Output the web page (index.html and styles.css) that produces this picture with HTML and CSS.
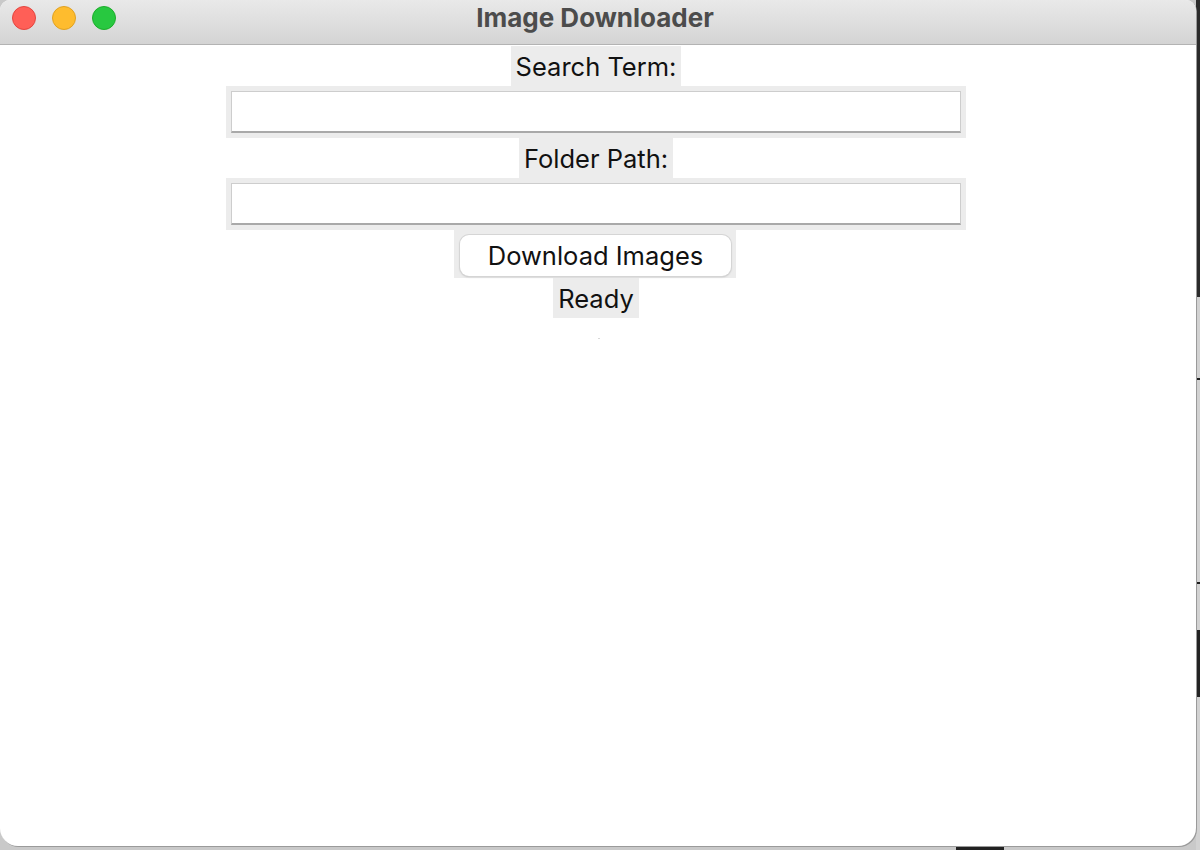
FILE: index.html
```html
<!DOCTYPE html>
<html>
<head>
<meta charset="utf-8">
<title>Image Downloader</title>
<link rel="stylesheet" href="styles.css">
</head>
<body>
<div class="window">
  <div class="titlebar">
    <div class="lights">
      <span class="light red"></span>
      <span class="light yellow"></span>
      <span class="light green"></span>
    </div>
    <div class="title">Image Downloader</div>
  </div>
  <div class="content">
    <div class="label">Search Term:</div>
    <div class="entry-frame"><input class="entry" type="text"></div>
    <div class="label">Folder Path:</div>
    <div class="entry-frame"><input class="entry" type="text"></div>
    <div class="button-frame"><button class="button">Download Images</button></div>
    <div class="label">Ready</div>
    <div class="progress"></div>
  </div>
</div>
</body>
</html>
```
FILE: styles.css
```css
html, body {
  margin: 0;
  padding: 0;
}
body {
  width: 1200px;
  height: 850px;
  overflow: hidden;
  background:
    linear-gradient(to right, transparent 956px, #222 956px, #222 1004px, transparent 1004px) 0 846px / 1200px 4px no-repeat,
    linear-gradient(to bottom, #2b2b2b 0, #2b2b2b 297px, #d2d2d2 297px, #d2d2d2 378px, #1e1e1e 378px, #1e1e1e 380px, #d2d2d2 380px, #d2d2d2 582px, #1e1e1e 582px, #1e1e1e 584px, #d2d2d2 584px, #d2d2d2 630px, #232323 630px, #232323 697px, #d2d2d2 697px) 1196px 0 / 4px 850px no-repeat,
    #c9c9c9;
  font-family: "Inter", "Liberation Sans", Arial, sans-serif;
}
.window {
  width: 1196px;
  height: 846px;
  background: #fff;
  border-radius: 10px 10px 18px 18px;
  overflow: hidden;
  box-shadow: 1px 1px 0 #9a9a9a;
  display: flex;
  flex-direction: column;
}
.titlebar {
  height: 44px;
  flex: none;
  border-bottom: 1px solid #b3b3b3;
  background: linear-gradient(to bottom, #e9e9e9, #d4d4d4);
  display: flex;
  align-items: center;
  position: relative;
}
.lights {
  display: flex;
  gap: 16px;
  padding-left: 12px;
  margin-top: -8px;
}
.light {
  width: 22px;
  height: 22px;
  border-radius: 50%;
  border: 1px solid;
}
.red { background: #ff5f57; border-color: #e2463f; }
.yellow { background: #febc2e; border-color: #dfa123; }
.green { background: #28c840; border-color: #1dad2b; }
.title {
  position: absolute;
  left: 0;
  right: 6px;
  top: 2px;
  text-align: center;
  font-weight: bold;
  font-size: 26px;
  color: #4c4c4c;
  pointer-events: none;
}
.content {
  display: flex;
  flex-direction: column;
  align-items: center;
  margin-left: -4px;
  padding-top: 1px;
}
.label {
  background: #ececec;
  height: 40px;
  line-height: 42px;
  padding: 0 5px;
  font-size: 25.5px;
  color: #111;
}
.entry-frame {
  background: #ececec;
  padding: 5px;
  width: 730px;
  height: 42px;
}
.entry {
  box-sizing: border-box;
  display: block;
  width: 730px;
  height: 42px;
  margin: 0;
  border: 1px solid #cdcdcd;
  border-bottom: 2px solid #a9a9a9;
  background: #fff;
  outline: none;
  padding: 0 4px;
  font: inherit;
}
.button-frame {
  background: #ececec;
  padding: 5px 5px 2px 6px;
  margin-right: 2px;
}
.button {
  width: 271px;
  height: 41px;
  background: #fff;
  border: none;
  border-radius: 9px;
  box-shadow: 0 0 0 1px #d5d5d5, 0 1px 2px #b5b5b5;
  font-family: "Inter", "Liberation Sans", Arial, sans-serif;
  font-size: 25.5px;
  color: #111;
  padding: 0;
  line-height: 40px;
}
.progress {
  width: 2px;
  height: 1px;
  background: #d8d8d8;
  margin-top: 20px;
  margin-left: 6px;
}
```
